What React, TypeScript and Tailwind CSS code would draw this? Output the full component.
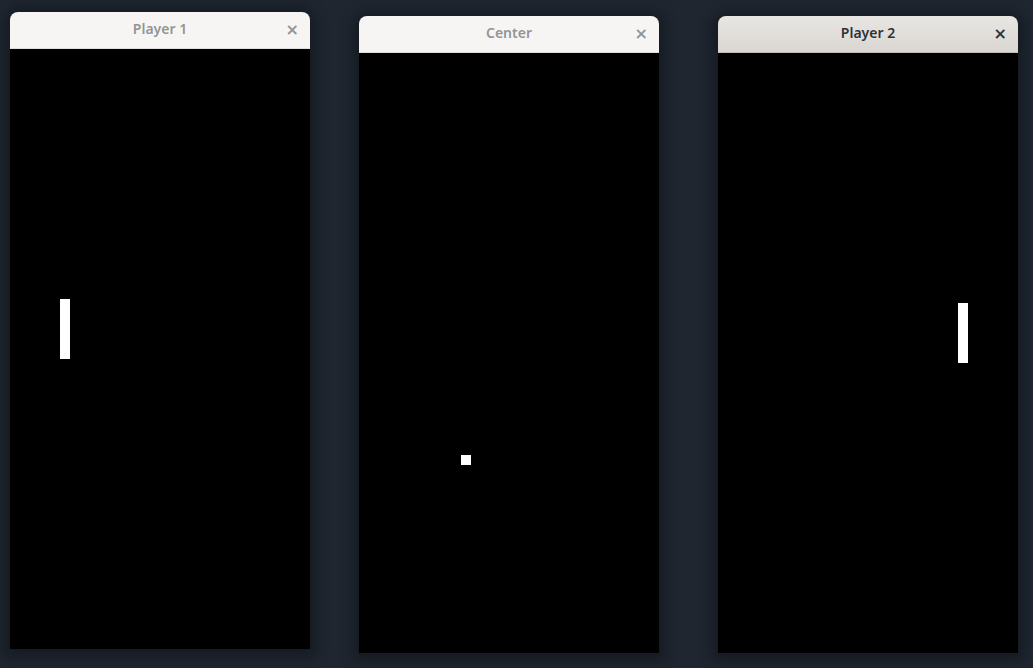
import React from "react";

function Win({
  title,
  active,
  className,
  children,
}: {
  title: string;
  active?: boolean;
  className?: string;
  children?: React.ReactNode;
}) {
  return (
    <div
      className={
        "flex w-[300px] flex-col rounded-t-[8px] shadow-[0_2px_14px_6px_rgba(0,0,0,0.3)] " +
        (className ?? "")
      }
    >
      <div
        className={
          "relative flex h-[37px] items-center justify-center rounded-t-[8px] border-b pb-[3px] " +
          (active
            ? "bg-gradient-to-b from-[#e8e6e3] to-[#dad6d2] border-[#c0bdb8] text-[#2e3436]"
            : "bg-[#f6f5f4] border-[#e0ddda] text-[#929595]")
        }
      >
        <span className="text-[14px] font-semibold [font-family:'Noto_Sans',sans-serif]">{title}</span>
        <span
          className={
            "absolute right-[11px] top-[9px] text-[16px] font-bold leading-[18px] [font-family:'DejaVu_Sans',sans-serif] " +
            (active ? "text-[#2e3436]" : "text-[#929595]")
          }
        >
          ×
        </span>
      </div>
      <div className="relative h-[600px] bg-black">{children}</div>
    </div>
  );
}

export default function App() {
  return (
    <div className="flex h-[668px] w-[1033px] items-start overflow-hidden bg-[#1f2630] pl-[10px]">
      <Win title="Player 1" className="mt-[12px]">
        <div className="absolute left-[50px] top-[250px] h-[60px] w-[10px] bg-white" />
      </Win>
      <Win title="Center" className="ml-[49px] mt-[16px]">
        <div className="absolute left-[102px] top-[402px] h-[10px] w-[10px] bg-white" />
      </Win>
      <Win title="Player 2" active className="ml-[59px] mt-[16px]">
        <div className="absolute left-[240px] top-[250px] h-[60px] w-[10px] bg-white" />
      </Win>
    </div>
  );
}
